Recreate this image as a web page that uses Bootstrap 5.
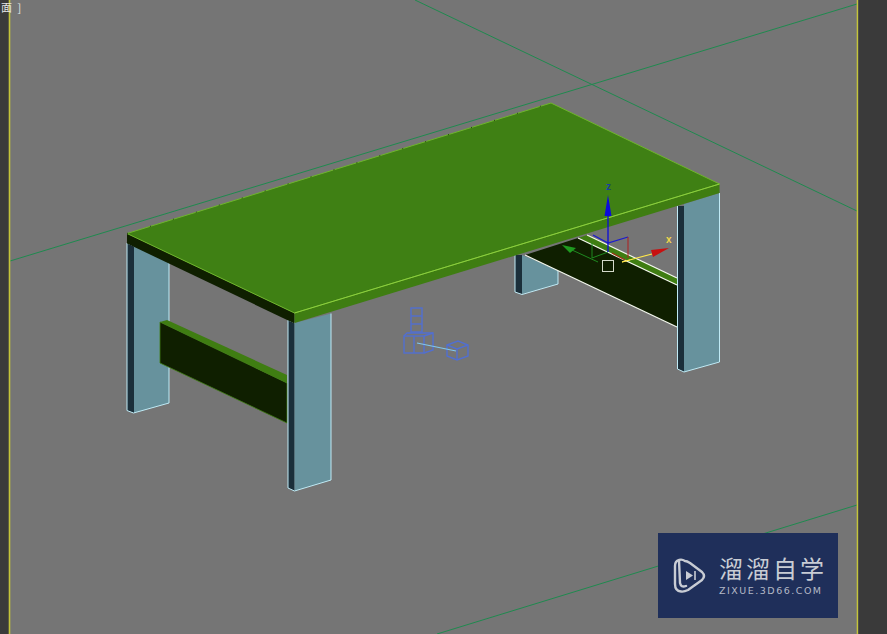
<!DOCTYPE html>
<html lang="zh">
<head>
  <meta charset="UTF-8">
  <meta name="viewport" content="width=device-width, initial-scale=1.0">
  <title>3D视口</title>
  <link href="https://cdn.jsdelivr.net/npm/bootstrap@5.3.0/dist/css/bootstrap.min.css" rel="stylesheet">
  <style>
    html, body { height: 100%; overflow: hidden; background: #757575; }
    .viewport { width: 887px; height: 634px; overflow: hidden; }
    .scene { width: 887px; height: 634px; display: block; }
    .view-label { left: 1px; top: 0; font: 11px/15px "Noto Sans CJK SC", "Liberation Sans", sans-serif; color: #e4e4e4; letter-spacing: 1.5px; }
    .gizmo-txt { font: bold 10px "Liberation Sans", sans-serif; }
    .wm { left: 658px; top: 533px; width: 180px; height: 85px; background: #1f2f5a; color: #c8ccd4; padding-left: 15px; gap: 12px; }
    .wm-title { font: 400 24px/24px "Noto Sans CJK SC", sans-serif; letter-spacing: 3px; white-space: nowrap; }
    .wm-url { font: 9.5px/11px "DejaVu Sans", sans-serif; letter-spacing: 1.5px; white-space: nowrap; color: #b4b9c6; margin-top: 5px; }
  </style>
</head>
<body class="m-0">

<div class="viewport position-relative">
  <svg class="scene" viewBox="0 0 887 634" xmlns="http://www.w3.org/2000/svg">
    <rect width="887" height="634" fill="#757575"/>

    <!-- grid -->
    <g stroke="#1f8a4f" stroke-width="1" fill="none">
      <line x1="10" y1="261" x2="857" y2="4"/>
      <line x1="415" y1="0" x2="857" y2="211"/>
      <line x1="437" y1="634" x2="857" y2="505"/>
    </g>

    <!-- back leg -->
    <polygon points="515,255 522,255 522,294 515,292" fill="#1b2f3a"/>
    <polygon points="522,255 558,270 558,284 522,294" fill="#67929d"/>
    <polyline points="515,255 515,292 522,294.5 558,284 558,270" fill="none" stroke="#bfeaf5"/>

    <!-- right board -->
    <polygon points="525,255 578,238 677,285 677,327" fill="#0f1f00"/>
    <polygon points="587,235 677,278 677,285 578,238" fill="#3f7d12"/>
    <g stroke="#f4f8ee" stroke-width="1.2" fill="none">
      <line x1="525" y1="255" x2="677" y2="327"/>
      <line x1="578" y1="238" x2="677" y2="285"/>
      <line x1="587" y1="235" x2="677" y2="278"/>
    </g>

    <!-- right leg -->
    <polygon points="677.5,206 684,206 684,372 677.5,369" fill="#1b2f3a"/>
    <polygon points="684,204 719.5,193 719.5,362 684,372" fill="#67929d"/>
    <polyline points="677.5,206 677.5,369 684,372 719.5,362 719.5,193" fill="none" stroke="#bfeaf5"/>

    <!-- left leg -->
    <polygon points="127,243 134,246 134,413 127,410.5" fill="#1b2f3a"/>
    <polygon points="134,246 169,263 169,403 134,413" fill="#67929d"/>
    <polyline points="127,243 127,410.5 133.5,413 169,403 169,263" fill="none" stroke="#bfeaf5"/>
    <line x1="127" y1="243" x2="134" y2="246" stroke="#bfeaf5"/>

    <!-- left board -->
    <polygon points="160,322 287,383 287,423 160,363" fill="#0f1f00" stroke="#3f7d12" stroke-width=".8"/>
    <polygon points="160,322 167,320 287,375 287,383" fill="#3f7d12"/>

    <!-- front leg -->
    <polygon points="288,320 294.5,323 294.5,491 288,488" fill="#1b2f3a"/>
    <polygon points="294.5,323 331,313.5 331,480 294.5,491" fill="#67929d"/>
    <polyline points="288,320 288,488 294.5,491 331,480 331,313.5" fill="none" stroke="#bfeaf5"/>
    <line x1="288" y1="320" x2="295" y2="323" stroke="#bfeaf5"/>

    <!-- table top -->
    <polygon points="127,233.5 294.5,313 294.5,323.500 127,243.500" fill="#0f1f00"/>
    <polygon points="294.5,313 719.5,184 719.5,193 294.5,323" fill="#3f7d12"/>
    <polygon points="127,233.5 551,103 719.5,184 294.5,313" fill="#3f8014" stroke="#6fb52c" stroke-width="1" stroke-linejoin="round"/>
    <line x1="294.5" y1="313" x2="719.5" y2="184" stroke="#8fd13f" stroke-width=".9"/>
    <line x1="127" y1="233.500" x2="551" y2="103" stroke="#10220a" stroke-width=".8" stroke-dasharray="1 23"/>

    <!-- helpers -->
    <g fill="none" stroke="#4c6fe0" stroke-width="1.400" opacity=".85">
      <rect x="411" y="308" width="11" height="24"/>
      <line x1="411" y1="316" x2="422" y2="316"/>
      <line x1="411" y1="324" x2="422" y2="324"/>
      <rect x="404" y="336" width="20" height="17"/>
      <polyline points="404,336 407,333 433,333 433,350 424,353"/>
      <line x1="424" y1="336" x2="433" y2="333"/>
      <line x1="414" y1="336" x2="414" y2="353"/>
      <polygon points="447,345 458,341 468,345 468,356 457,360 447,356"/>
      <polyline points="447,345 457,349 468,345"/>
      <line x1="457" y1="349" x2="457" y2="360"/>
    </g>
    <line x1="417" y1="343" x2="456" y2="351" stroke="#7fc6ef" stroke-width="1.200"/>

    <!-- transform gizmo -->
    <polyline points="593,235 608,243 628,237" fill="none" stroke="#1a1ad0" stroke-width="1.200"/>
    <line x1="628" y1="237" x2="628" y2="258" stroke="#b02020"/>
    <line x1="612" y1="253" x2="625" y2="260" stroke="#a02a10" stroke-width="1.200"/>
    <polyline points="592,243 592,258 608,252" fill="none" stroke="#1f8a1f"/>
    <line x1="572" y1="250" x2="598" y2="262" stroke="#1f8a1f"/>
    <polygon points="562,245 576,248 570,253" fill="#1f9a1f"/>
    <line x1="608" y1="252" x2="608" y2="214" stroke="#0c0cd8" stroke-width="1.300"/>
    <polygon points="608,195 604.500,216 611.500,216" fill="#0c0cd8"/>
    <text x="606" y="190" class="gizmo-txt" fill="#1a3fa0">z</text>
    <line x1="622" y1="262" x2="652" y2="254" stroke="#ffe84a" stroke-width="1.200"/>
    <line x1="622" y1="262" x2="630" y2="260" stroke="#ffe84a" stroke-width="1"/>
    <polygon points="669,248 651,250 653,257" fill="#c81010"/>
    <text x="666" y="243" class="gizmo-txt" fill="#f0d84a">x</text>
    <rect x="602.500" y="260.500" width="11" height="11" fill="none" stroke="#d4dacb"/>

    <!-- viewport frame -->
    <rect x="0" y="0" width="9" height="634" fill="#3a3a3a"/>
    <rect x="8.700" y="0" width="1.600" height="634" fill="#c4c43a"/>
    <rect x="856.700" y="0" width="1.600" height="634" fill="#c4c43a"/>
    <rect x="858.300" y="0" width="29" height="634" fill="#3a3a3a"/>
  </svg>

  <div class="view-label position-absolute">面 ]</div>

  <div class="wm position-absolute d-flex align-items-center">
    <svg width="34" height="37" viewBox="0 0 34 37" fill="none" stroke="#c8ccd4" xmlns="http://www.w3.org/2000/svg">
      <path d="M6 3 L7 26 Q8 31 13 29 M12 4 Q9 2 6 3 Q2 4 2 9 L2 27 Q2 34 8 34.500 Q11 35 15 33 L29 23 Q33 19 29 15 L17 6 Q14 4 12 4" stroke-width="2.400" stroke-linejoin="round" stroke-linecap="round"/>
      <path d="M13 14 L20 18.500 L13 23 Z" fill="#c8ccd4" stroke="none"/>
      <line x1="22" y1="14" x2="22" y2="23" stroke-width="1.600"/>
    </svg>
    <div>
      <div class="wm-title">溜溜自学</div>
      <div class="wm-url">ZIXUE.3D66.COM</div>
    </div>
  </div>
</div>

<script src="https://cdn.jsdelivr.net/npm/bootstrap@5.3.0/dist/js/bootstrap.bundle.min.js"></script>
</body>
</html>
